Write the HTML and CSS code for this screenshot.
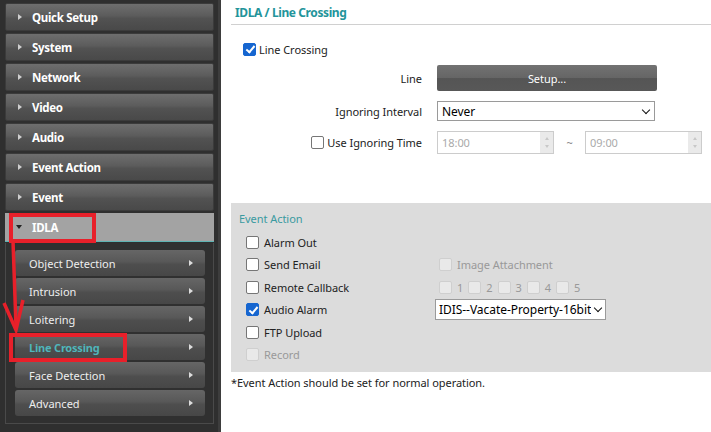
FILE: index.html
```html
<!DOCTYPE html>
<html>
<head>
<meta charset="utf-8">
<link rel="stylesheet" href="styles.css">
</head>
<body>
<div class="sidebar">
  <div class="menu-item"><span class="tri"></span>Quick Setup</div>
  <div class="menu-item"><span class="tri"></span>System</div>
  <div class="menu-item"><span class="tri"></span>Network</div>
  <div class="menu-item"><span class="tri"></span>Video</div>
  <div class="menu-item"><span class="tri"></span>Audio</div>
  <div class="menu-item"><span class="tri"></span>Event Action</div>
  <div class="menu-item"><span class="tri"></span>Event</div>
  <div class="menu-item active"><span class="tri down"></span>IDLA</div>
  <div class="submenu">
    <div class="sub-item">Object Detection<span class="subtri"></span></div>
    <div class="sub-item">Intrusion<span class="subtri"></span></div>
    <div class="sub-item">Loitering<span class="subtri"></span></div>
    <div class="sub-item current">Line Crossing<span class="subtri"></span></div>
    <div class="sub-item">Face Detection<span class="subtri"></span></div>
    <div class="sub-item">Advanced<span class="subtri"></span></div>
  </div>
  <svg class="annot" width="220" height="432" viewBox="0 0 220 432">
    <rect x="11" y="215" width="83" height="26" fill="none" stroke="#e8202a" stroke-width="4"/>
    <rect x="11" y="335" width="114" height="25" fill="none" stroke="#e8202a" stroke-width="4"/>
    <path d="M13 241 L16 326" stroke="#e8202a" stroke-width="3.5" fill="none"/>
    <path d="M4 303 L16 330 L23 300" stroke="#e8202a" stroke-width="3.5" fill="none"/>
  </svg>
</div>
<div class="main">
  <div class="title">IDLA / Line Crossing</div>
  <label class="chk-row"><span class="cb checked"></span>Line Crossing</label>
  <div class="form">
    <div class="lbl r1">Line</div>
    <div class="ctl r1"><div class="btn">Setup...</div></div>
    <div class="lbl r2">Ignoring Interval</div>
    <div class="ctl r2"><div class="select">Never<span class="chev"></span></div></div>
    <div class="lbl r3"><span class="cb"></span>Use Ignoring Time</div>
    <div class="ctl r3">
      <div class="spin">18:00<span class="spin-btn"><i class="up"></i><i class="dn"></i></span></div>
      <span class="tilde">~</span>
      <div class="spin">09:00<span class="spin-btn"><i class="up"></i><i class="dn"></i></span></div>
    </div>
  </div>
  <div class="event-box">
    <div class="ev-title">Event Action</div>
    <div class="ev-grid">
      <div class="ev-l"><span class="cb"></span>Alarm Out</div>
      <div class="ev-r"></div>
      <div class="ev-l"><span class="cb"></span>Send Email</div>
      <div class="ev-r dis"><span class="cb dis"></span>Image Attachment</div>
      <div class="ev-l"><span class="cb"></span>Remote Callback</div>
      <div class="ev-r dis nums">
        <span class="cb dis"></span><span class="n">1</span><span class="cb dis"></span><span class="n">2</span><span class="cb dis"></span><span class="n">3</span><span class="cb dis"></span><span class="n">4</span><span class="cb dis"></span><span class="n">5</span>
      </div>
      <div class="ev-l"><span class="cb checked"></span>Audio Alarm</div>
      <div class="ev-r"><div class="select small"><span class="sel-text">IDIS--Vacate-Property-16bit</span><span class="chev"></span></div></div>
      <div class="ev-l"><span class="cb"></span>FTP Upload</div>
      <div class="ev-r"></div>
      <div class="ev-l dis"><span class="cb dis"></span>Record</div>
      <div class="ev-r"></div>
    </div>
  </div>
  <div class="note">*Event Action should be set for normal operation.</div>
</div>
</body>
</html>
```

FILE: styles.css
```css
* { box-sizing: border-box; }
html, body { margin: 0; padding: 0; }
body {
  width: 711px;
  height: 432px;
  overflow: hidden;
  display: flex;
  font-family: "Noto Sans", "Open Sans", sans-serif;
  font-size: 11px;
  letter-spacing: -0.05px;
  color: #222;
  background: #fff;
}
.sidebar {
  position: relative;
  width: 221px;
  flex: none;
  background: #2f2f2f;
  border-right: 3px solid #3d3d3d;
  padding: 3px 4px 0 5px;
}
.menu-item {
  height: 28px;
  margin-bottom: 2px;
  border-radius: 2px;
  background: linear-gradient(#6e6e6e 0%, #5c5c5c 45%, #525252 55%, #494949 100%);
  border: 1px solid #3b3b3b;
  color: #fff;
  font-weight: bold;
  font-size: 11.5px;
  display: flex;
  align-items: center;
  padding-left: 12px;
  letter-spacing: -0.3px;
}
.tri {
  width: 0; height: 0;
  border-left: 4px solid #cfcfcf;
  border-top: 3.5px solid transparent;
  border-bottom: 3.5px solid transparent;
  margin-right: 10px;
}
.tri.down {
  border-left: 3.5px solid transparent;
  border-right: 3.5px solid transparent;
  border-top: 4px solid #222;
  border-bottom: 0;
  margin-right: 10px;
  margin-left: -1px;
}
.menu-item.active {
  background: #a3a3a3;
  border: 0;
  border-bottom: 1px solid #5fb3b3;
  border-radius: 0;
  height: 29px;
  margin-bottom: 0;
}
.submenu {
  margin-top: 1px;
  border: 1px solid #4a4a4a;
  border-top: 0;
  height: 181px;
  background: #303030;
  padding: 7px 8px 0 9px;
}
.sub-item {
  height: 26px;
  margin-bottom: 2px;
  border-radius: 3px;
  background: linear-gradient(#666 0%, #585858 45%, #4e4e4e 55%, #474747 100%);
  color: #eee;
  font-size: 11px;
  letter-spacing: 0;
  display: flex;
  align-items: center;
  justify-content: space-between;
  padding: 0 12px 0 14px;
}
.sub-item.current { color: #4fb6bb; font-weight: bold; letter-spacing: -0.2px; }
.subtri {
  width: 0; height: 0;
  border-left: 4px solid #ddd;
  border-top: 3.5px solid transparent;
  border-bottom: 3.5px solid transparent;
}
.annot { position: absolute; left: 0; top: 0; pointer-events: none; }

.main {
  flex: 1;
  padding-left: 10px;
}
.title {
  color: #23949a;
  font-weight: bold;
  font-size: 12px;
  letter-spacing: -0.4px;
  padding: 4px 0 0 4px;
  height: 25px;
  border-bottom: 1px solid #d0d0d0;
}
.cb {
  display: inline-block;
  width: 13px; height: 13px;
  border: 1px solid #767676;
  border-radius: 2px;
  background: #fff;
  flex: none;
}
.cb.checked {
  background: #1666d0;
  border-color: #1666d0;
  position: relative;
}
.cb.checked::after {
  content: "";
  position: absolute;
  left: 3.5px; top: 0.5px;
  width: 3px; height: 7px;
  border: solid #fff;
  border-width: 0 2px 2px 0;
  transform: rotate(40deg);
}
.cb.dis { background: #e9e9e9; border-color: #cfcfcf; }
.chk-row {
  display: flex;
  align-items: center;
  gap: 3px;
  margin: 15px 0 0 12px;
  height: 18px;
}
.form {
  display: grid;
  grid-template-columns: 191px 275px;
  grid-template-rows: 28px 38px 24px;
  column-gap: 15px;
  margin-top: 6px;
}
.lbl {
  display: flex;
  align-items: center;
  justify-content: flex-end;
  gap: 3px;
}
.ctl { display: flex; align-items: center; }
.btn {
  width: 220px;
  height: 26px;
  border-radius: 2px;
  background: linear-gradient(#727272 0%, #666 48%, #555 52%, #585858 100%);
  color: #fff;
  display: flex; align-items: center; justify-content: center;
}
.select {
  width: 218px;
  height: 20px;
  border: 1px solid #9a9a9a;
  background: #fff;
  display: flex; align-items: center; justify-content: space-between;
  padding: 0 5px 0 4px;
  font-size: 12px;
  color: #000;
}
.chev {
  width: 6px; height: 6px;
  border: solid #111;
  border-width: 0 1.5px 1.5px 0;
  transform: rotate(45deg);
  margin-top: -3px;
  flex: none;
}
.spin {
  width: 117px;
  height: 23px;
  border: 1px solid #ccc;
  color: #aaa;
  display: flex; align-items: center;
  padding-left: 4px;
  position: relative;
}
.spin-btn {
  position: absolute;
  right: 0; top: 0; bottom: 0;
  width: 13px;
  background: #eaeaea;
  display: flex; flex-direction: column; align-items: center; justify-content: space-evenly;
}
.spin-btn i { width: 0; height: 0; border-left: 2.5px solid transparent; border-right: 2.5px solid transparent; }
.spin-btn .up { border-bottom: 3px solid #c8c8c8; }
.spin-btn .dn { border-top: 3px solid #c8c8c8; }
.tilde { width: 31px; text-align: center; color: #888; }

.event-box {
  margin-top: 49px;
  background: #dcdcdc;
  height: 169px;
  padding: 8px 0 0 8px;
}
.ev-title { color: #3a9aa0; height: 20px; }
.ev-grid {
  display: grid;
  grid-template-columns: 193px 280px;
  grid-auto-rows: 22.5px;
  padding-left: 7px;
}
.ev-l, .ev-r { display: flex; align-items: center; gap: 5px; color: #222; }
.ev-r.dis, .ev-l.dis { color: #999; }
.nums { gap: 0; }
.nums .n { margin: 0 5px 0 5px; }
.select.small {
  width: 171px;
  height: 21px;
  margin-left: -4px;
  padding: 0 4px 0 3px;
}
.sel-text { white-space: nowrap; overflow: hidden; width: 152px; }
.note { margin-top: 3px; }
```
